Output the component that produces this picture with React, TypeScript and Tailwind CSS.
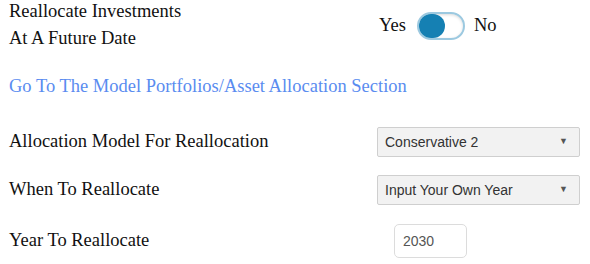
import React from "react";

const serif = { fontFamily: '"Liberation Serif", "Times New Roman", serif' };
const sans = { fontFamily: '"Liberation Sans", Arial, sans-serif' };

function Select({ value }: { value: string }) {
  return (
    <div className="flex h-[30px] w-[203px] items-center justify-between rounded-[2px] border border-[#cfcfcf] bg-[#f2f2f2] pl-[7px] pr-[11px] text-[14px] text-[#333]" style={sans}>
      <span>{value}</span>
      <span className="text-[9px] text-[#555]">▼</span>
    </div>
  );
}

export default function App() {
  return (
    <div className="h-[264px] w-[590px] bg-white pl-[9px] text-[18.5px] text-[#111]" style={serif}>
      <div className="flex h-[56px]">
        <div className="-mt-[2px] w-[370px] leading-[27px]">
          <div>Reallocate Investments</div>
          <div>At A Future Date</div>
        </div>
        <div className="flex h-[52px] items-center">
          <span className="mr-[11px]">Yes</span>
          <div className="relative h-[28px] w-[48px] rounded-full border-2 border-[#9cc9e0] bg-white shadow-[inset_0_1px_3px_rgba(0,0,0,0.15)]">
            <div className="absolute left-[0px] top-[0px] h-[24px] w-[26px] rounded-full bg-[#1580b3]" />
          </div>
          <span className="ml-[9px]">No</span>
        </div>
      </div>
      <div className="mt-[17px] leading-[26px] text-[#5a8cf0]">Go To The Model Portfolios/Asset Allocation Section</div>
      <div className="mt-[28px] flex items-center">
        <div className="w-[368px]">Allocation Model For Reallocation</div>
        <Select value="Conservative 2" />
      </div>
      <div className="mt-[18px] flex items-center">
        <div className="w-[368px]">When To Reallocate</div>
        <Select value="Input Your Own Year" />
      </div>
      <div className="mt-[19px] flex items-center">
        <div className="w-[385px]">Year To Reallocate</div>
        <div className="flex h-[34px] w-[73px] items-center rounded-[5px] border border-[#dcdcdc] bg-white pl-[8px] text-[14px] text-[#555]" style={sans}>2030</div>
      </div>
    </div>
  );
}
